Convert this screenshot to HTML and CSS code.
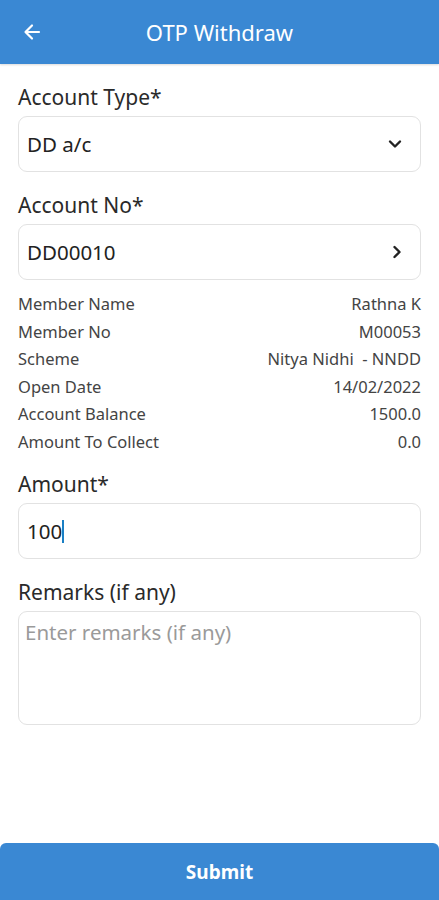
FILE: index.html
```html
<!DOCTYPE html>
<html lang="en">
<head>
    <meta charset="UTF-8">
    <meta name="viewport" content="width=device-width, initial-scale=1.0">
    <title>OTP Withdraw</title>
    <link rel="stylesheet" href="styles.css">
</head>
<body>
    <header class="app-bar">
        <span class="back">
            <svg width="20" height="20" viewBox="0 0 20 20"><path d="M17 10H4M10 3.5L3.5 10L10 16.5" fill="none" stroke="#fff" stroke-width="2.2" stroke-linecap="round" stroke-linejoin="round"/></svg>
        </span>
        <h1>OTP Withdraw</h1>
    </header>

    <main class="form">
        <label class="label">Account Type*</label>
        <div class="field">
            <span>DD a/c</span>
            <svg width="14" height="10" viewBox="0 0 14 10"><path d="M2 2.5L7 7.5L12 2.5" fill="none" stroke="#222" stroke-width="2.4" stroke-linecap="round" stroke-linejoin="round"/></svg>
        </div>

        <label class="label">Account No*</label>
        <div class="field">
            <span>DD00010</span>
            <svg width="10" height="14" viewBox="0 0 10 14"><path d="M2.5 2L7.5 7L2.5 12" fill="none" stroke="#222" stroke-width="2.4" stroke-linecap="round" stroke-linejoin="round"/></svg>
        </div>

        <div class="details">
            <div class="row"><span>Member Name</span><span>Rathna K</span></div>
            <div class="row"><span>Member No</span><span>M00053</span></div>
            <div class="row"><span>Scheme</span><span>Nitya Nidhi &nbsp;- NNDD</span></div>
            <div class="row"><span>Open Date</span><span>14/02/2022</span></div>
            <div class="row"><span>Account Balance</span><span>1500.0</span></div>
            <div class="row"><span>Amount To Collect</span><span>0.0</span></div>
        </div>

        <label class="label">Amount*</label>
        <div class="field">
            <span>100<i class="caret"></i></span>
        </div>

        <label class="label">Remarks (if any)</label>
        <div class="field area">
            <span class="placeholder">Enter remarks (if any)</span>
        </div>
    </main>

    <button class="submit">Submit</button>
</body>
</html>
```

FILE: styles.css
```css
body {
    margin: 0;
    font-family: 'Noto Sans', sans-serif;
    background: #fff;
    color: #222;
    height: 900px;
    display: flex;
    flex-direction: column;
}

.app-bar {
    height: 64px;
    background: #3a88d3;
    display: flex;
    align-items: center;
    justify-content: center;
    position: relative;
    box-shadow: 0 1px 2px rgba(0, 0, 0, 0.15);
}

.app-bar h1 {
    margin: 0;
    color: #fff;
    font-size: 22px;
    font-weight: 400;
}

.back {
    position: absolute;
    left: 22px;
    top: 22px;
    height: 20px;
}

.form {
    flex: 1;
    padding: 21px 18px 0;
    display: flex;
    flex-direction: column;
}

.label {
    font-size: 21px;
    color: #2a2a2a;
    line-height: 25px;
    margin-bottom: 6px;
}

.field {
    height: 56px;
    box-sizing: border-box;
    border: 1px solid #e2e2e2;
    border-radius: 9px;
    padding: 0 18px 0 8px;
    display: flex;
    align-items: center;
    justify-content: space-between;
    font-size: 20.5px;
    color: #222;
    margin-bottom: 21px;
}

.field.area {
    height: 114px;
    align-items: flex-start;
    padding-top: 6px;
    padding-left: 6px;
}

.placeholder {
    color: #9a9a9a;
}

.caret {
    display: inline-block;
    width: 2px;
    height: 23px;
    background: #1a7fc4;
    vertical-align: -4px;
}

.details {
    margin-top: -11px;
    margin-bottom: 16px;
}

.row {
    display: flex;
    justify-content: space-between;
    font-size: 16.5px;
    color: #444;
    line-height: 27.6px;
}

.submit {
    height: 57px;
    border: none;
    border-radius: 6px 6px 0 0;
    background: #3a88d3;
    color: #fff;
    font-family: 'Noto Sans', sans-serif;
    font-size: 19px;
    font-weight: 700;
}
```
